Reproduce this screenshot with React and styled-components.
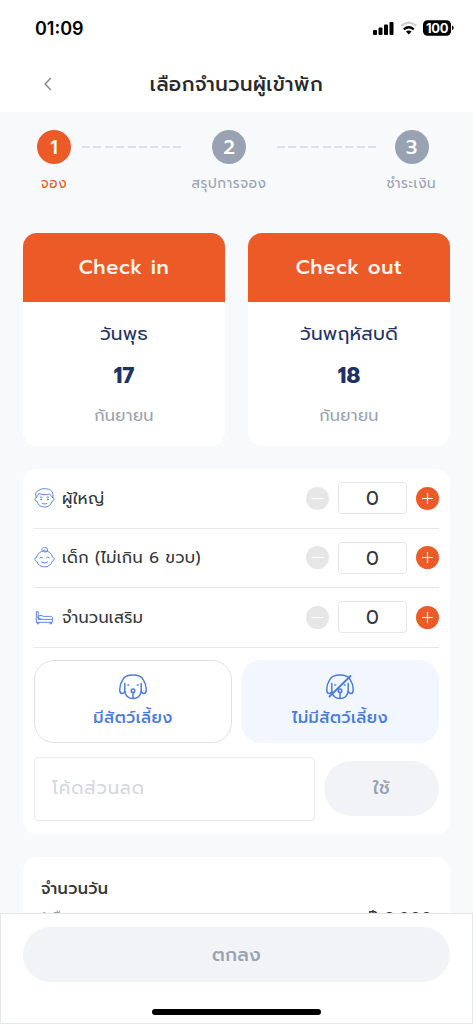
import React, { useState } from "react";
import styled, { createGlobalStyle } from "styled-components";

const colors = {
  primary: "#ec5a28",
  navy: "#1d3265",
  blue: "#4a7be0",
  gray: "#98a2b3",
  text: "#333538",
  line: "#e6e7e9",
  background: "#f7f9fb",
  disabled: "#f2f3f7",
};

const guests = [
  { id: "adult", label: "ผู้ใหญ่" },
  { id: "child", label: "เด็ก (ไม่เกิน 6 ขวบ)" },
  { id: "bed", label: "จำนวนเสริม" },
];

const AdultIcon = () => (
  <svg width="21" height="21" viewBox="0 0 21 21" fill="none" stroke={colors.blue} strokeWidth="0.9" strokeLinecap="round" strokeLinejoin="round">
    <path d="M2.300 9.300C.9 6 1.700 3.400 4.200 2.900 6.200.5 11 .2 14.200 1.200c3.700.6 5.400 3.700 4.600 8.100" />
    <path d="M2.900 9.200c.1-1.400.8-2.800 2-3.700 3.100 1.500 6.700 1.400 10.300.6 1.500.7 2.500 1.700 2.900 3.100" />
    <path d="M2.600 9.400c-2.400 0-2.400 3.700.2 3.700A8.100 8.600 0 0 0 18.200 13.100c2.600 0 2.600-3.700.2-3.700" />
    <path d="M6.200 9.200q1-.6 2 0M12.800 9.200q1-.6 2 0M8.200 15.600q2.300 1 4.600 0" />
    <circle cx="7.200" cy="11.400" r=".45" fill={colors.blue} />
    <circle cx="13.800" cy="11.400" r=".45" fill={colors.blue} />
  </svg>
);

const ChildIcon = () => (
  <svg width="21" height="21" viewBox="0 0 21 21" fill="none" stroke={colors.blue} strokeWidth="0.9" strokeLinecap="round" strokeLinejoin="round">
    <path d="M2.500 10.200A8.200 8 0 0 1 18.500 10.200c2.300.3 2.300 3.700-.2 4A8.300 8.600 0 0 1 2.700 14.200c-2.500-.3-2.500-3.700-.2-4z" />
    <path d="M8.400 3.900C6.700 1.900 8.600.1 10.500.6c3.400-.4 4.300 3.200 1.800 4.200-2 .8-3.400-.8-2.200-2" />
    <path d="M5.700 10.800q1.400-1.700 2.800 0M12.500 10.800q1.400-1.700 2.800 0M7.500 15.100q3 2 6 0" />
  </svg>
);

const BedIcon = () => (
  <svg width="21" height="21" viewBox="0 0 21 21" fill="none" stroke={colors.blue} strokeWidth="0.9" strokeLinejoin="round">
    <path d="M2.300 4.700h1.900v7.700h14.200v2.900H2.300zM4.200 11.200V9.100l3-.8 2.300 1.100h7c1.600 0 2.200 1 2.200 3M4.200 10.800l3.100 1.600M3.400 15.300v1.500h1.400v-1.500M16 15.300v1.500h1.500v-1.500" />
  </svg>
);

const guestIcons = { adult: AdultIcon, child: ChildIcon, bed: BedIcon };

const DogIcon = ({ crossed }) => (
  <svg width="28" height="26" viewBox="0 0 28 26" fill="none" stroke={colors.blue} strokeWidth="1.500" strokeLinecap="round" strokeLinejoin="round">
    <path d="M5.800 9.500v7.200c0 3.200-4.300 3.700-4.900.8C.4 13.600 1.600 9 3.800 5.600 5.500 2.400 8.300 1 14 1s8.500 1.400 10.200 4.600c2.200 3.400 3.400 8 2.900 11.900-.6 2.900-4.900 2.400-4.900-.8V9.500" />
    <path d="M5.900 17.500C6.600 21.900 9.600 24.600 14 24.600s7.400-2.700 8.100-7.100M14 18.600v5.600" />
    <circle cx="14" cy="16.700" r="1.800" />
    <circle cx="9.300" cy="11" r=".3" fill={colors.blue} />
    <circle cx="18.700" cy="11" r=".3" fill={colors.blue} />
    {crossed && <path d="M3.500 22.500 24.500 2" strokeWidth="1.800" />}
  </svg>
);

const StatusIcons = () => (
  <svg width="82" height="18" viewBox="0 0 82 18">
    <rect x="1" y="11" width="4" height="5" rx="1" />
    <rect x="6.500" y="8.500" width="4" height="7.500" rx="1" />
    <rect x="12" y="5.500" width="4" height="10.500" rx="1" />
    <rect x="17.500" y="3" width="4" height="13" rx="1" />
    <g fill="none" strokeWidth="2.300">
      <path d="M29.200 6.900Q36.800.4 44.400 6.900" stroke="#cfcfcf" />
      <path d="M31.800 10.300q5-4 10 0" stroke="#000" />
    </g>
    <path d="M34 12.500q2.800-2 5.600 0l-2.800 2.900z" />
    <rect x="51" y="1.200" width="28" height="15.500" rx="4.500" />
    <path d="M80 6.500q1.700.4 1.700 2.300T80 11.100z" />
    <text x="65" y="13.700" fill="#fff" fontFamily="Inter, sans-serif" fontWeight="700" fontSize="13" letterSpacing="-0.300" textAnchor="middle">100</text>
  </svg>
);

const Stepper = ({ value, onChange }) => (
  <StepperWrapper>
    <RoundButton disabled={value === 0} onClick={() => onChange(value - 1)}>
      <svg width="13" height="13" viewBox="0 0 13 13" stroke="currentColor" strokeWidth="1.200">
        <path d="M.5 6.500h12" />
      </svg>
    </RoundButton>
    <Amount>{value}</Amount>
    <RoundButton onClick={() => onChange(value + 1)}>
      <svg width="13" height="13" viewBox="0 0 13 13" stroke="currentColor" strokeWidth="1.200">
        <path d="M1 6.500h11M6.500 1v11" />
      </svg>
    </RoundButton>
  </StepperWrapper>
);

const DateCard = ({ title, day, date, month }) => (
  <DateWrapper>
    <DateHeader>{title}</DateHeader>
    <DateBody>
      <Weekday>{day}</Weekday>
      <DayNumber>{date}</DayNumber>
      <Month>{month}</Month>
    </DateBody>
  </DateWrapper>
);

const App = () => {
  const [counts, setCounts] = useState({ adult: 0, child: 0, bed: 0 });
  const [pets, setPets] = useState(false);

  return (
    <Screen>
      <GlobalStyle />
      <StatusBar>
        <Time>01:09</Time>
        <StatusIcons />
      </StatusBar>
      <TopBar>
        <BackButton aria-label="back">
          <svg width="8" height="14" viewBox="0 0 8 14" fill="none" stroke="#8a8a8a" strokeWidth="1.500">
            <path d="M6.800 1 1.200 7l5.600 6" />
          </svg>
        </BackButton>
        <Title>เลือกจำนวนผู้เข้าพัก</Title>
      </TopBar>
      <Content>
        <Steps>
          <Step $width={34} $active>
            <StepCircle $active>1</StepCircle>
            <StepLabel>จอง</StepLabel>
          </Step>
          <StepLine />
          <Step $width={74}>
            <StepCircle>2</StepCircle>
            <StepLabel>สรุปการจอง</StepLabel>
          </Step>
          <StepLine />
          <Step $width={49}>
            <StepCircle>3</StepCircle>
            <StepLabel>ชำระเงิน</StepLabel>
          </Step>
        </Steps>
        <Dates>
          <DateCard title="Check in" day="วันพุธ" date="17" month="กันยายน" />
          <DateCard title="Check out" day="วันพฤหัสบดี" date="18" month="กันยายน" />
        </Dates>
        <GuestCard>
          {guests.map(({ id, label }) => {
            const Icon = guestIcons[id];
            return (
              <GuestRow key={id}>
                <Icon />
                <GuestLabel>{label}</GuestLabel>
                <Stepper value={counts[id]} onChange={(value) => setCounts({ ...counts, [id]: value })} />
              </GuestRow>
            );
          })}
          <PetOptions>
            <PetButton $selected={pets} onClick={() => setPets(true)}>
              <DogIcon />
              <span>มีสัตว์เลี้ยง</span>
            </PetButton>
            <PetButton $selected={!pets} onClick={() => setPets(false)}>
              <DogIcon crossed />
              <span>ไม่มีสัตว์เลี้ยง</span>
            </PetButton>
          </PetOptions>
          <CodeRow>
            <CodeInput placeholder="โค้ดส่วนลด" />
            <ApplyButton>ใช้</ApplyButton>
          </CodeRow>
        </GuestCard>
        <SummaryCard>
          <SummaryTitle>จำนวนวัน</SummaryTitle>
          <SummaryRow>
            <span>1 คืน</span>
            <Price>฿ 2,000</Price>
          </SummaryRow>
        </SummaryCard>
      </Content>
      <Footer>
        <ConfirmButton>ตกลง</ConfirmButton>
        <HomeIndicator />
      </Footer>
    </Screen>
  );
};

const GlobalStyle = createGlobalStyle`
  * {
    box-sizing: border-box;
  }
  body {
    margin: 0;
    overflow: hidden;
  }
  button,
  input {
    font: inherit;
    letter-spacing: inherit;
    margin: 0;
    padding: 0;
    border: 0;
    background: none;
  }
`;
const Screen = styled.div`
  display: flex;
  flex-direction: column;
  width: 473px;
  height: 1024px;
  background: ${colors.background};
  color: ${colors.text};
  font-family: Prompt, Kanit, "Noto Sans Thai", "Noto Sans", sans-serif;
  letter-spacing: 0.3px;
  white-space: nowrap;
  overflow: hidden;
`;
const StatusBar = styled.div`
  display: flex;
  justify-content: space-between;
  align-items: center;
  flex: none;
  height: 56px;
  padding: 0 19px 0 35px;
  background: white;
`;
const Time = styled.span`
  font-family: Inter, sans-serif;
  font-size: 18px;
  font-weight: 600;
  letter-spacing: 0;
  color: black;
`;
const TopBar = styled.header`
  display: grid;
  grid-template-columns: 48px 1fr 48px;
  align-items: center;
  flex: none;
  height: 56px;
  padding: 0 24px;
  background: white;
`;
const BackButton = styled.button`
  display: flex;
  justify-content: center;
`;
const Title = styled.h1`
  margin: 0;
  text-align: center;
  font-size: 19.500px;
  font-weight: 500;
  letter-spacing: 0.6px;
  color: #27292c;
`;
const Content = styled.main`
  flex: 1;
  min-height: 0;
  padding: 18px 23px 0;
  overflow: hidden;
`;
const Steps = styled.div`
  display: flex;
  gap: 11px;
  height: 103px;
  padding: 0 14px;
`;
const Step = styled.div`
  display: flex;
  flex-direction: column;
  align-items: center;
  flex: none;
  width: ${({ $width }) => $width}px;
  color: ${({ $active }) => ($active ? colors.primary : colors.gray)};
`;
const StepCircle = styled.div`
  display: flex;
  align-items: center;
  justify-content: center;
  width: 34px;
  height: 34px;
  border-radius: 50%;
  background: ${({ $active }) => ($active ? colors.primary : colors.gray)};
  color: white;
  font-size: 20px;
  font-weight: 500;
  letter-spacing: 0;
`;
const StepLabel = styled.span`
  margin-top: 10px;
  font-size: 13.500px;
  line-height: 20px;
  letter-spacing: 0.6px;
`;
const StepLine = styled.div`
  flex: 1;
  height: 2px;
  margin-top: 16px;
  background: repeating-linear-gradient(90deg, #dddfe4 0 8px, transparent 8px 11.400px);
`;
const Dates = styled.div`
  display: grid;
  grid-template-columns: 1fr 1fr;
  gap: 23px;
`;
const DateWrapper = styled.section`
  height: 213px;
  border-radius: 14px;
  background: white;
  text-align: center;
  overflow: hidden;
`;
const DateHeader = styled.div`
  height: 69px;
  background: ${colors.primary};
  color: #fff5ec;
  font-size: 20px;
  font-weight: 500;
  line-height: 69px;
  letter-spacing: 0.6px;
`;
const DateBody = styled.div`
  display: flex;
  flex-direction: column;
  padding-top: 12px;
  line-height: 41px;
`;
const Weekday = styled.span`
  font-size: 18.500px;
  color: ${colors.navy};
`;
const DayNumber = styled.span`
  font-size: 22px;
  font-weight: 700;
  line-height: 41px;
  letter-spacing: 0;
  color: ${colors.navy};
`;
const Month = styled.span`
  font-size: 16px;
  line-height: 40px;
  letter-spacing: 0.4px;
  color: ${colors.gray};
`;
const GuestCard = styled.section`
  height: 365px;
  margin-top: 23px;
  padding: 0 11px;
  border-radius: 14px;
  background: white;
`;
const GuestRow = styled.div`
  display: flex;
  align-items: center;
  height: 59.500px;
  border-bottom: 1.500px solid ${colors.line};
`;
const GuestLabel = styled.span`
  flex: 1;
  margin-left: 7px;
  padding-top: 1px;
  font-size: 16px;
  letter-spacing: 0.35px;
`;
const StepperWrapper = styled.div`
  display: flex;
  align-items: center;
  gap: 9px;
`;
const RoundButton = styled.button`
  display: flex;
  align-items: center;
  justify-content: center;
  width: 23px;
  height: 23px;
  border-radius: 50%;
  background: ${colors.primary};
  color: white;
  &:disabled {
    background: #e6e6e6;
  }
`;
const Amount = styled.div`
  width: 69px;
  height: 32px;
  border: 1.500px solid ${colors.line};
  border-radius: 4px;
  text-align: center;
  font-size: 19px;
  line-height: 31px;
  letter-spacing: 0;
`;
const PetOptions = styled.div`
  display: grid;
  grid-template-columns: 1fr 1fr;
  gap: 9px;
  margin-top: 12px;
`;
const PetButton = styled.button`
  display: flex;
  flex-direction: column;
  align-items: center;
  height: 83px;
  padding-top: 13px;
  border: 1px solid ${({ $selected }) => ($selected ? "#f2f7ff" : "#dfe1e5")};
  border-radius: 20px;
  background: ${({ $selected }) => ($selected ? "#f2f7ff" : "white")};
  color: ${colors.blue};
  font-size: 16px;
  font-weight: 500;
  line-height: 37px;
  letter-spacing: 0.45px;
`;
const CodeRow = styled.div`
  display: flex;
  align-items: center;
  gap: 9px;
  margin-top: 14px;
`;
const CodeInput = styled.input`
  flex: 1;
  min-width: 0;
  height: 64px;
  padding: 0 17px 2px;
  border: 1px solid #e9eaee;
  border-radius: 4px;
  font-size: 18px;
  letter-spacing: 0.9px;
  &::placeholder {
    color: #d4d7df;
    opacity: 1;
  }
`;
const ApplyButton = styled.button`
  width: 115px;
  height: 55px;
  padding-bottom: 2px;
  border-radius: 28px;
  background: ${colors.disabled};
  color: ${colors.gray};
  font-size: 18px;
  font-weight: 500;
`;
const SummaryCard = styled.section`
  height: 160px;
  margin-top: 23px;
  padding: 19px 18px 0;
  border-radius: 14px;
  background: white;
`;
const SummaryTitle = styled.h2`
  margin: 0;
  font-size: 16px;
  font-weight: 500;
  line-height: 26px;
  letter-spacing: 0.4px;
`;
const SummaryRow = styled.div`
  display: flex;
  justify-content: space-between;
  margin-top: 1px;
  color: ${colors.gray};
  font-size: 14px;
  line-height: 30px;
`;
const Price = styled.span`
  color: ${colors.text};
  font-size: 16px;
`;
const Footer = styled.footer`
  display: flex;
  flex-direction: column;
  align-items: center;
  flex: none;
  height: 111px;
  padding: 13px 22px 0;
  border: 1px solid #e5e8eb;
  background: white;
`;
const ConfirmButton = styled.button`
  width: 100%;
  height: 55px;
  border-radius: 28px;
  background: ${colors.disabled};
  color: ${colors.gray};
  font-size: 18.500px;
  font-weight: 500;
`;
const HomeIndicator = styled.div`
  width: 169px;
  height: 6px;
  margin-top: 27px;
  border-radius: 3px;
  background: black;
`;

export default App;
